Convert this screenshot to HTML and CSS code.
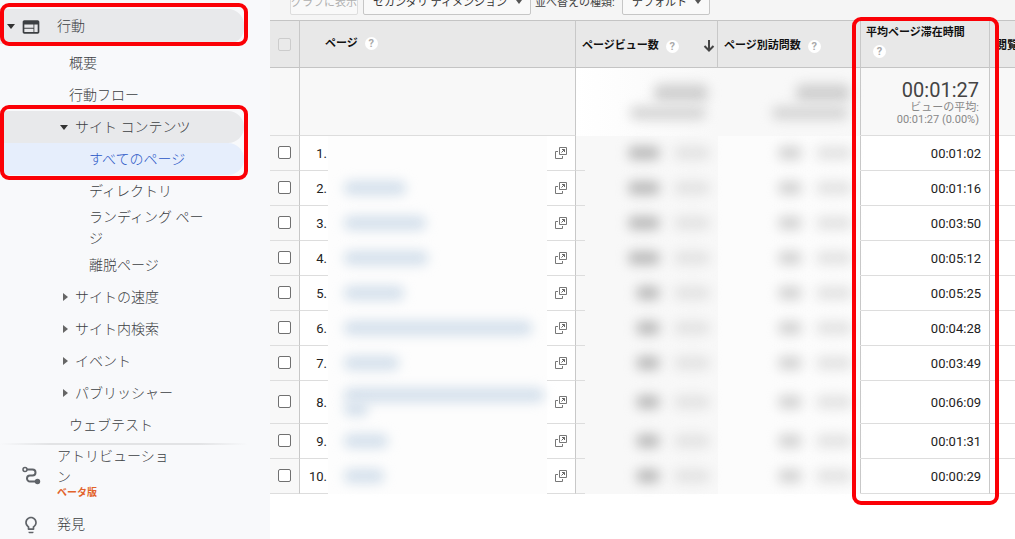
FILE: index.html
```html
<!DOCTYPE html>
<html lang="ja">
<head>
<meta charset="utf-8">
<title>すべてのページ</title>
<link rel="stylesheet" href="styles.css">
</head>
<body>
<svg class="defs" aria-hidden="true">
  <symbol id="open" viewBox="0 0 12 12"><path d="M4.500.5h7v7h-7zM3 4.500H.5v7h7V9" fill="none" stroke="#777"/><path d="M6.500 5.500l3-3M7 2.500h2.500v2.500" fill="none" stroke="#666"/></symbol>
</svg>
<nav class="sidebar">
  <div class="marked marked-top">
    <a class="section active" href="#"><i class="caret down"></i>
      <svg class="icon" viewBox="0 0 24 24"><path fill="#3c4043" d="M20 4H4c-1.100 0-2 .9-2 2v12c0 1.100.9 2 2 2h16c1.100 0 2-.9 2-2V6c0-1.100-.9-2-2-2zm-5 14H4v-4h11v4zm0-5H4V9h11v4zm5 5h-4V9h4v9z"/></svg>
      <span>行動</span></a>
  </div>
  <a class="item" href="#">概要</a>
  <a class="item" href="#">行動フロー</a>
  <div class="marked">
    <a class="item group open" href="#"><i class="caret down"></i>サイト コンテンツ</a>
    <a class="item leaf current" href="#">すべてのページ</a>
  </div>
  <a class="item leaf" href="#">ディレクトリ</a>
  <a class="item leaf" href="#">ランディング ページ</a>
  <a class="item leaf" href="#">離脱ページ</a>
  <a class="item group" href="#"><i class="caret right"></i>サイトの速度</a>
  <a class="item group" href="#"><i class="caret right"></i>サイト内検索</a>
  <a class="item group" href="#"><i class="caret right"></i>イベント</a>
  <a class="item group" href="#"><i class="caret right"></i>パブリッシャー</a>
  <a class="item" href="#">ウェブテスト</a>
  <hr class="divider">
  <a class="section attribution" href="#"><i class="caret"></i>
    <svg class="icon" viewBox="0 0 20 20"><path d="M4 3.500h7.500a3 3 0 0 1 0 6H9a3 3 0 0 0 0 6h7" fill="none" stroke="#5f6368" stroke-width="2"/><circle cx="4" cy="3.500" r="2" fill="#f8f9fb" stroke="#5f6368" stroke-width="1.500"/><circle cx="16.500" cy="15.500" r="2.700" fill="#5f6368"/></svg>
    <span class="label">アトリビューション<b class="beta">ベータ版</b></span></a>
  <a class="section" href="#"><i class="caret"></i>
    <svg class="icon" viewBox="0 0 24 24"><path fill="#5f6368" d="M9 21c0 .55.45 1 1 1h4c.55 0 1-.45 1-1v-1H9v1zm3-19C8.140 2 5 5.140 5 9c0 2.380 1.190 4.470 3 5.740V17c0 .55.45 1 1 1h6c.55 0 1-.45 1-1v-2.260c1.810-1.270 3-3.360 3-5.740 0-3.860-3.140-7-7-7zm2.850 11.100l-.85.6V16h-4v-2.300l-.85-.6A5 5 0 1 1 17 9c0 1.630-.8 3.160-2.150 4.100z"/></svg>
    <span>発見</span></a>
</nav>
<main class="report">
  <div class="toolbar">
    <button class="control" disabled>グラフに表示</button>
    <div class="drop"><select class="control secondary" aria-label="セカンダリ ディメンション"><option>セカンダリ ディメンション</option></select></div>
    <label for="sort">並べ替えの種類:</label>
    <div class="drop"><select class="control sort" id="sort"><option>デフォルト</option></select></div>
  </div>
  <div class="table-wrap">
    <table>
      <colgroup><col class="c-check"><col class="c-num"><col><col class="c-open"><col class="c-metric"><col class="c-visits"><col class="c-time"><col class="c-next"></colgroup>
      <thead>
        <tr>
          <th class="check"><input type="checkbox" disabled aria-label="すべて選択"></th>
          <th class="page edge" colspan="3">ページ<i class="help">?</i></th>
          <th class="edge"><div class="head">ページビュー数<i class="help">?</i><svg class="arrow" viewBox="0 0 12 12"><path d="M6 0v10.500M1.500 6L6 10.500 10.500 6" fill="none" stroke="#444" stroke-width="2"/></svg></div></th>
          <th class="edge"><div class="head">ページ別訪問数<i class="help">?</i></div></th>
          <th class="edge time-head">平均ページ滞在時間<br><i class="help">?</i></th>
          <th class="next">閲覧</th>
        </tr>
      </thead>
      <tbody id="rows">
        <tr class="summary">
          <td class="check"></td><td class="edge" colspan="3"></td>
          <td class="masked metric"><i class="smudge total"></i><i class="smudge share"></i></td>
          <td class="masked edge visits"><i class="smudge total"></i><i class="smudge share"></i></td>
          <td class="edge time"><strong>00:01:27</strong><small>ビューの平均:</small><small>00:01:27 (0.00%)</small></td><td></td>
        </tr>
      </tbody>
    </table>
    <div class="column-mark"></div>
  </div>
</main>
<script src="rows.js"></script>
</body>
</html>
```
FILE: styles.css
```css
* { box-sizing: border-box; }
body {
  margin: 0;
  display: flex;
  height: 100vh;
  font-family: Roboto, "Noto Sans CJK JP", sans-serif;
  color: #222;
  background: #fff;
  overflow: hidden;
}
.defs { position: absolute; width: 0; height: 0; }

.sidebar {
  flex: 0 0 270px;
  padding-top: 3px;
  background: #f8f9fb;
  font-size: 14px;
  line-height: 21px;
  font-weight: 300;
}
.sidebar a { color: #3c4043; text-decoration: none; }
.marked { position: relative; width: 248px; }
.marked::after {
  content: "";
  position: absolute;
  inset: -6px 0 -5px;
  border: 4px solid #fb0006;
  border-radius: 9px;
}
.marked-top { padding: 6px 0 2px; margin-bottom: 1px; }
.marked-top::after { inset: 0; }
.section {
  display: flex;
  align-items: center;
  min-height: 35px;
  padding-left: 7px;
}
.active, .open { background: #e8e9eb; border-radius: 0 16px 16px 0; margin-right: 4px; }
.icon { width: 20px; height: 20px; margin: 0 16px 0 6px; }
.item {
  display: flex;
  align-items: center;
  min-height: 32px;
  padding-left: 69px;
}
.item.group { padding-left: 60px; }
.item.leaf { padding-left: 89px; padding-right: 60px; }
.sidebar .item.current {
  color: #2a56c6;
  background: #e6eefc;
  border-radius: 0 16px 16px 0;
  margin-right: 4px;
  padding-right: 20px;
}
.caret { width: 8px; flex: none; }
.caret.down { border: 4px solid transparent; border-top: 5px solid #333; border-bottom: 0; }
.group .caret { margin-right: 7px; }
.group .caret.right { width: 5px; margin: 0 7px 0 3px; border: 4px solid transparent; border-left: 5px solid #666; border-right: 0; }
.divider {
  height: 2px;
  margin: 2px 22px 0 0;
  border: 0;
  background: linear-gradient(90deg, transparent, #e2e3e5 20%, #e2e3e5 80%, transparent);
}
.attribution { min-height: 62px; padding-bottom: 8px; }
.attribution .label { width: 116px; }
.attribution .icon { margin-top: 8px; }
.beta { display: block; font-size: 10px; line-height: 10px; font-weight: 700; color: #e2632b; }

.report { flex: 1; min-width: 0; }
.toolbar {
  display: flex;
  align-items: flex-end;
  height: 20px;
  padding: 0 0 5px 20px;
  background: #f5f5f5;
  font-size: 11px;
  line-height: 24px;
  white-space: nowrap;
}
.control {
  display: block;
  flex: none;
  height: 25px;
  margin: 0;
  padding: 0;
  border: 1px solid #c6c6c6;
  border-radius: 2px;
  background: #f9f9f9;
  font: inherit;
  color: #333;
}
.control:disabled { width: 68px; border-color: #ddd; color: #b0b0b0; margin-right: 5px; }
select.control { appearance: none; padding: 0 9px; }
.drop { position: relative; flex: none; }
.drop::after {
  content: "";
  position: absolute;
  right: 9px;
  bottom: 11px;
  border: 3px solid transparent;
  border-top: 4px solid #555;
  border-bottom: 0;
}
.secondary { width: 168px; }
.sort { width: 88px; }
.toolbar label { width: 91px; padding-left: 4px; color: #444; }

.table-wrap { position: relative; }
table { width: 100%; table-layout: fixed; border-collapse: separate; border-spacing: 0; }
.c-check { width: 30px; }
.c-num { width: 28px; }
.c-open { width: 29px; }
.c-metric { width: 142px; }
.c-visits { width: 143px; }
.c-time { width: 129px; }
.c-next { width: 25px; }
th {
  height: 48px;
  padding: 0 0 0 5px;
  border-top: 1px solid #c4c4c4;
  border-bottom: 1px solid #c4c4c4;
  background: #e8e8e8;
  font-size: 11px;
  line-height: 16px;
  text-align: left;
  color: #111;
  white-space: nowrap;
}
.edge, .check { border-right: 1px solid #c8c8c8; }
th.page { padding-left: 25px; }
.head { display: flex; align-items: center; padding: 4px 2px 0 1px; }
.arrow { width: 12px; height: 12px; margin-left: auto; }
.help {
  display: inline-block;
  width: 13px;
  height: 13px;
  margin-left: 7px;
  border-radius: 50%;
  background: #fff;
  color: #aaa;
  font-size: 11px;
  line-height: 13px;
  font-style: normal;
  text-align: center;
}
th.next { padding-left: 6px; padding-top: 4px; overflow: hidden; text-overflow: clip; }
td { height: 35px; padding: 0; border-bottom: 1px solid #ddd; font-size: 13px; }
.tall td { height: 43px; }
td.check { background: #f8f8f8; }
.check { text-align: center; }
th.check { padding: 0; }
input[type="checkbox"] {
  appearance: none;
  display: block;
  width: 13px;
  height: 13px;
  margin: 0 auto;
  border: 1px solid #707070;
  border-radius: 2px;
  background: #fff;
}
tbody .check { padding-bottom: 2px; }
input[type="checkbox"]:disabled { border-color: #ccc; background: #eaeaea; }
.num { text-align: right; padding-right: 1px; }
.url { border-bottom-color: #fdfdfd; background: #fdfdfd; padding-left: 16px; }
.launch { text-align: center; }
.launch svg { display: block; width: 12px; height: 12px; margin: 0 auto; }
.time { text-align: right; padding-right: 8px; }
th.time-head { padding-bottom: 3px; }
.time-head .help { margin-top: 4px; }
.masked { border-bottom-color: transparent; }
td.metric { background: linear-gradient(#ddd, #ddd) no-repeat left bottom / 9px 1px border-box, #f8f8f8; }
td.visits { background: #fcfcfc; }
.values { display: flex; justify-content: flex-end; gap: 14px; padding-right: 8px; }
.smudge { display: block; height: 14px; border-radius: 6px; filter: blur(6px); }
.value { background: #bcbcbc; }
.visits .value { background: #d4d4d4; }
.percent { width: 36px; background: #e3e3e3; }
.link { background: #d3dfeb; }
.summary td { height: 68px; background: #f8f8f8; }
.summary td.metric { background: linear-gradient(90deg, #fff, #f8f8f8); }
.total { width: 54px; height: 18px; margin: 0 10px 4px auto; background: #d0d0d0; }
.share { width: 76px; height: 14px; margin: 0 12px 0 auto; background: #d6d6d6; }
.summary .time { padding-right: 10px; color: #444; }
.summary strong, .summary small { display: block; font-weight: 400; }
.summary strong { font-size: 20px; line-height: 24px; }
.summary small { font-size: 11px; line-height: 12px; color: #888; }
.column-mark {
  position: absolute;
  top: -3px;
  right: 16px;
  bottom: -11px;
  width: 147px;
  border: 4px solid #fb0006;
  border-radius: 9px;
  pointer-events: none;
}
```
FILE: rows.js
```js
const rows = [
  { links: [], value: 32, time: "00:01:02" },
  { links: [62], value: 32, time: "00:01:16" },
  { links: [82], value: 32, time: "00:03:50" },
  { links: [84], value: 32, time: "00:05:12" },
  { links: [60], value: 24, time: "00:05:25" },
  { links: [188], value: 24, time: "00:04:28" },
  { links: [55], value: 24, time: "00:03:49" },
  { links: [200, 24], value: 24, time: "00:06:09" },
  { links: [44], value: 24, time: "00:01:31" },
  { links: [40], value: 24, time: "00:00:29" }
];
const values = width => `<div class="values"><i class="smudge value" style="width:${width}px"></i><i class="smudge percent"></i></div>`;
document.getElementById("rows").insertAdjacentHTML("beforeend", rows.map((row, i) => `
  <tr class="${row.links.length > 1 ? "tall" : ""}">
    <td class="check"><input type="checkbox" aria-label="${i + 1}"></td>
    <td class="num">${i + 1}.</td>
    <td class="url">${row.links.map(w => `<i class="smudge link" style="width:${w}px"></i>`).join("")}</td>
    <td class="launch edge"><svg><use href="#open"/></svg></td>
    <td class="masked metric">${values(row.value)}</td>
    <td class="masked visits edge">${values(24)}</td>
    <td class="time edge">${row.time}</td>
    <td></td>
  </tr>`).join(""));
```
